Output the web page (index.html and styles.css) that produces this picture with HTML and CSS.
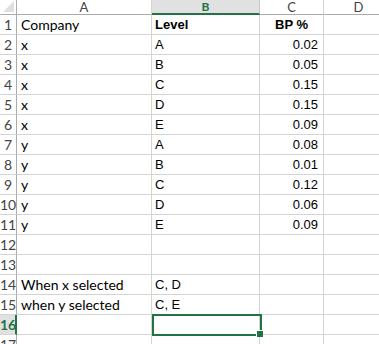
FILE: index.html
```html
<!DOCTYPE html>
<html>
<head>
<meta charset="utf-8">
<link rel="stylesheet" href="styles.css">
</head>
<body>
<div class="sheet">
  <div class="corner"><span class="tri"></span></div>
  <div class="ch">A</div>
  <div class="ch sel">B</div>
  <div class="ch">C</div>
  <div class="ch">D</div>

  <div class="rh">1</div><div class="c a">Company</div><div class="c b bold">Level</div><div class="c b bold center">BP %</div><div class="c"></div>
  <div class="rh">2</div><div class="c a">x</div><div class="c b">A</div><div class="c b num">0.02</div><div class="c"></div>
  <div class="rh">3</div><div class="c a">x</div><div class="c b">B</div><div class="c b num">0.05</div><div class="c"></div>
  <div class="rh">4</div><div class="c a">x</div><div class="c b">C</div><div class="c b num">0.15</div><div class="c"></div>
  <div class="rh">5</div><div class="c a">x</div><div class="c b">D</div><div class="c b num">0.15</div><div class="c"></div>
  <div class="rh">6</div><div class="c a">x</div><div class="c b">E</div><div class="c b num">0.09</div><div class="c"></div>
  <div class="rh">7</div><div class="c a">y</div><div class="c b">A</div><div class="c b num">0.08</div><div class="c"></div>
  <div class="rh">8</div><div class="c a">y</div><div class="c b">B</div><div class="c b num">0.01</div><div class="c"></div>
  <div class="rh">9</div><div class="c a">y</div><div class="c b">C</div><div class="c b num">0.12</div><div class="c"></div>
  <div class="rh">10</div><div class="c a">y</div><div class="c b">D</div><div class="c b num">0.06</div><div class="c"></div>
  <div class="rh">11</div><div class="c a">y</div><div class="c b">E</div><div class="c b num">0.09</div><div class="c"></div>
  <div class="rh">12</div><div class="c"></div><div class="c"></div><div class="c"></div><div class="c"></div>
  <div class="rh">13</div><div class="c"></div><div class="c"></div><div class="c"></div><div class="c"></div>
  <div class="rh">14</div><div class="c a">When x selected</div><div class="c b">C, D</div><div class="c"></div><div class="c"></div>
  <div class="rh">15</div><div class="c a">when y selected</div><div class="c b">C, E</div><div class="c"></div><div class="c"></div>
  <div class="rh rsel">16</div><div class="c"></div><div class="c"></div><div class="c"></div><div class="c"></div>
  <div class="rh">17</div><div class="c"></div><div class="c"></div><div class="c"></div><div class="c"></div>

  <div class="selbox"><span class="handle"></span></div>
</div>
</body>
</html>
```
FILE: styles.css
```css
html, body {
  margin: 0;
  padding: 0;
  background: #fff;
  overflow: hidden;
}
body {
  width: 379px;
  height: 344px;
}
.sheet {
  position: relative;
  display: grid;
  grid-template-columns: 17px 135px 108px 64px 70px;
  grid-template-rows: 15px;
  grid-auto-rows: 20px;
  font-family: "Lato", "Liberation Sans", sans-serif;
}
.sheet > div {
  box-sizing: border-box;
}
.corner {
  position: relative;
  border-right: 1px solid #ababab;
  border-bottom: 1px solid #ababab;
  background: #fff;
}
.tri {
  position: absolute;
  right: 2px;
  bottom: 2px;
  width: 0;
  height: 0;
  border-left: 11px solid transparent;
  border-bottom: 11px solid #dfdfdf;
}
.ch {
  border-right: 1px solid #d4d4d4;
  border-bottom: 1px solid #ababab;
  color: #444;
  font-size: 13px;
  line-height: 14px;
  text-align: center;
  background: #fff;
}
.ch.sel {
  background: #e1e1e1;
  color: #217346;
  font-weight: bold;
  font-size: 12px;
  line-height: 13px;
  border-bottom: 2px solid #217346;
  border-right-color: #c6c6c6;
}
.rh {
  border-right: 1px solid #ababab;
  border-bottom: 1px solid #d4d4d4;
  color: #444;
  font-size: 14px;
  line-height: 20px;
  text-align: center;
  background: #fff;
}
.rh.rsel {
  background: #e1e1e1;
  color: #217346;
  font-weight: bold;
  border-right: 2px solid #217346;
}
.c {
  border-right: 1px solid #d4d4d4;
  border-bottom: 1px solid #d4d4d4;
  line-height: 19px;
  white-space: nowrap;
  overflow: hidden;
  color: #000;
}
.c.a {
  font-family: "Lato", "Liberation Sans", sans-serif;
  font-size: 14px;
  padding-left: 4px;
  line-height: 20px;
}
.c.b {
  font-family: "Liberation Sans", Arial, sans-serif;
  font-size: 13px;
  padding-left: 3px;
  line-height: 19px;
}
.c.bold {
  font-weight: bold;
}
.c.center {
  text-align: center;
  padding-left: 0;
}
.c.num {
  text-align: right;
  padding-right: 5px;
  padding-left: 0;
}
.selbox {
  position: absolute;
  left: 152px;
  top: 314px;
  width: 110px;
  height: 22px;
  box-sizing: border-box;
  border: 2px solid #217346;
}
.handle {
  position: absolute;
  right: -3px;
  bottom: -3px;
  width: 6px;
  height: 6px;
  background: #217346;
  border-left: 1px solid #fff;
  border-top: 1px solid #fff;
}
```
